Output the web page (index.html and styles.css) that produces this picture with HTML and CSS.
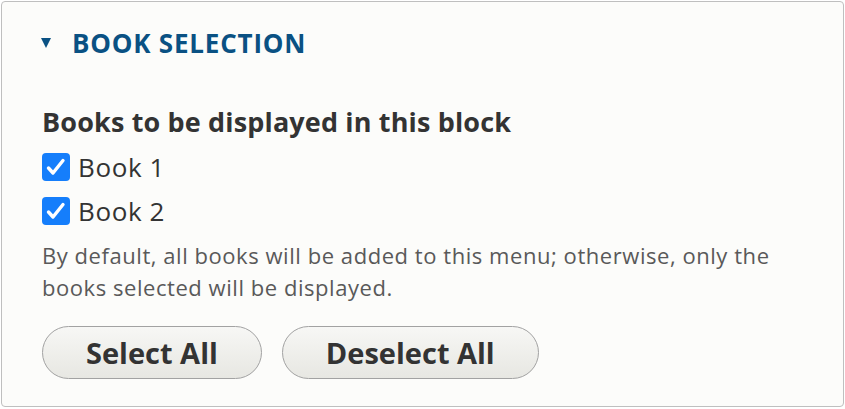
FILE: index.html
```html
<!DOCTYPE html>
<html lang="en">
<head>
    <meta charset="UTF-8">
    <title>Book selection</title>
    <link rel="stylesheet" href="styles.css">
</head>
<body>
    <details class="book-details" open>
        <summary class="book-summary">
            <span class="summary-arrow"></span>
            Book selection
        </summary>
        <div class="details-wrapper">
            <div class="form-item">
                <label class="field-label">Books to be displayed in this block</label>
                <div class="checkbox-row">
                    <span class="checkbox">
                        <svg viewBox="0 0 28 28" width="28" height="28"><path d="M6.5 15L11 20L21 7.5" fill="none" stroke="#fff" stroke-width="3.4" stroke-linecap="round" stroke-linejoin="round"/></svg>
                    </span>
                    <span class="option">Book 1</span>
                </div>
                <div class="checkbox-row">
                    <span class="checkbox">
                        <svg viewBox="0 0 28 28" width="28" height="28"><path d="M6.5 15L11 20L21 7.5" fill="none" stroke="#fff" stroke-width="3.4" stroke-linecap="round" stroke-linejoin="round"/></svg>
                    </span>
                    <span class="option">Book 2</span>
                </div>
                <p class="description">By default, all books will be added to this menu; otherwise, only the books selected will be displayed.</p>
            </div>
            <div class="actions">
                <button type="button" class="button">Select All</button>
                <button type="button" class="button">Deselect All</button>
            </div>
        </div>
    </details>
</body>
</html>
```

FILE: styles.css
```css
body {
    margin: 0;
    padding: 1px;
    background-color: #ffffff;
    font-family: "Open Sans", sans-serif;
    color: #333333;
}
.book-details {
    width: 843px;
    height: 406px;
    box-sizing: border-box;
    border: 1px solid #bfbfbf;
    border-radius: 4px;
    background-color: #fcfcfa;
}
.book-summary {
    list-style: none;
    display: flex;
    align-items: center;
    padding: 27px 0 0 39px;
    height: 28px;
    line-height: 28px;
    color: #0a5183;
    font-size: 26px;
    font-weight: bold;
    letter-spacing: 0.8px;
    text-transform: uppercase;
    cursor: pointer;
}
.book-summary::-webkit-details-marker {
    display: none;
}
.summary-arrow {
    width: 0;
    height: 0;
    border-left: 5px solid transparent;
    border-right: 5px solid transparent;
    border-top: 10px solid #0a5183;
    margin-right: 21px;
}
.details-wrapper {
    padding: 50px 0 0 40px;
}
.field-label {
    display: block;
    font-size: 27px;
    font-weight: bold;
    letter-spacing: 0.15px;
    line-height: 30px;
}
.checkbox-row {
    display: flex;
    align-items: center;
    gap: 8px;
    height: 44px;
}
.checkbox-row:first-of-type {
    margin-top: 8px;
}
.checkbox {
    width: 28px;
    height: 28px;
    border-radius: 4px;
    background-color: #157efb;
}
.checkbox svg {
    display: block;
}
.option {
    font-size: 26px;
    letter-spacing: 0.6px;
}
.description {
    margin: 6px 0 0;
    width: 750px;
    font-size: 22px;
    letter-spacing: 0.55px;
    line-height: 32px;
    color: #595959;
}
.actions {
    display: flex;
    gap: 20px;
    margin-top: 23px;
}
.button {
    height: 53px;
    padding: 0 43px;
    border: 1px solid #a2a2a2;
    border-radius: 27px;
    background: linear-gradient(#f7f7f5, #e7e7e2);
    font-family: "Open Sans", sans-serif;
    font-size: 29px;
    font-weight: bold;
    color: #333333;
    cursor: pointer;
}
```
